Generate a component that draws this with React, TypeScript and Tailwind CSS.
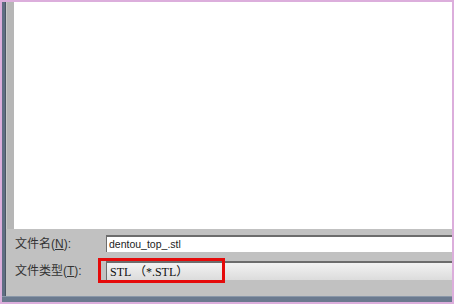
export default function App() {
  const label = 'text-[12px] text-[#333] leading-none';
  return (
    <div
      className="w-[454px] h-[304px] bg-[#dcaedc] p-[2px] pb-[2px]"
      style={{ fontFamily: '"Liberation Sans", "Noto Sans CJK SC", sans-serif' }}
    >
      <div className="relative w-full h-full flex flex-col">
        <div className="flex flex-1 min-h-0">
          {/* left window edge */}
          <div className="w-[3px] bg-[#5f6e83]" />
          <div className="w-[1px] bg-[#4b5563]" />
          <div className="flex flex-col flex-1 min-w-0">
            <div className="flex flex-1 min-h-0">
              <div className="w-[8px] bg-[#b6b6b6] border-l border-[#c8c8c8]" />
              <div className="flex-1 bg-white" />
            </div>
            {/* bottom panel */}
            <div className="h-[67px] bg-[#c1c1c1] pl-[9px] pt-[6px]">
              <div className="flex items-center h-[17px]">
                <div className={`w-[91px] ${label}`}>
                  文件名(<span className="underline">N</span>):
                </div>
                <div className="flex-1 h-full bg-white border-t-2 border-l border-[#6c6c6c] flex items-center pl-[2px] text-[10.5px] text-[#222]">
                  dentou_top_.stl
                </div>
              </div>
              <div className="flex items-center h-[19px] mt-[9px]">
                <div className={`w-[91px] ${label}`}>
                  文件类型(<span className="underline">T</span>):
                </div>
                <div
                  className="flex-1 h-full bg-gradient-to-b from-[#f2f2f2] to-[#dcdcdc] border-t-2 border-l border-[#6c6c6c] flex items-center pl-[3px] text-[12px] text-[#111]"
                  style={{ fontFamily: '"Liberation Serif", "Noto Sans CJK SC", serif' }}
                >
                  STL （*.STL）
                </div>
              </div>
            </div>
          </div>
        </div>
        <div className="h-[6px] bg-[#6b7a8f] border-t border-[#8a97a8]" />
        {/* annotation */}
        <div className="absolute left-[96px] top-[256px] w-[127px] h-[25px] border-[3px] border-[#e50a0a]" />
      </div>
    </div>
  );
}
